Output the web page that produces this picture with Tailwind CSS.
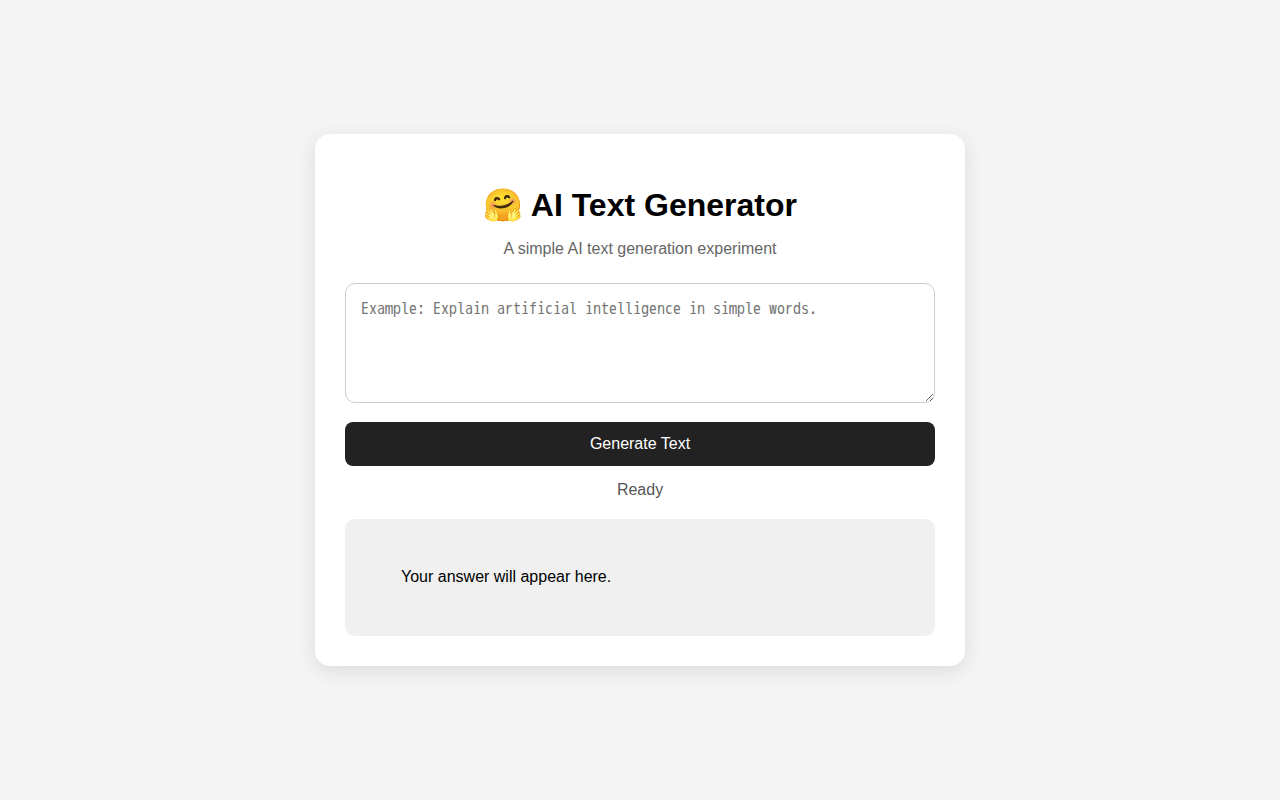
<!DOCTYPE html>
<html lang="en">
<head>
  <meta charset="UTF-8" />
  <meta name="viewport" content="width=device-width, initial-scale=1.0" />
  <title>AI Text Generator</title>
  <script src="https://cdn.jsdelivr.net/npm/@tailwindcss/browser@4"></script>
</head>
<body class="min-h-screen flex items-center justify-center bg-[#f4f4f4] text-black font-['Liberation_Sans',Arial,sans-serif]">

  <!-- === CARD === -->
  <main class="w-full max-w-[650px] p-[30px] bg-white rounded-[15px] shadow-[0_5px_20px_rgba(0,0,0,0.1)]">
    <h1 class="mt-[22px] mb-4 text-[32px] leading-[38px] font-bold text-center">🤗 AI Text Generator</h1>
    <p class="mb-[25px] text-base leading-[18px] text-center text-[#666]">A simple AI text generation experiment</p>

    <!-- === PROMPT === -->
    <textarea id="prompt" aria-label="Prompt" placeholder="Example: Explain artificial intelligence in simple words." class="block w-full h-[120px] p-[15px] mb-[19px] border border-[#ccc] rounded-[10px] text-base leading-5 resize-y font-['WenQuanYi_Zen_Hei_Mono','Noto_Sans_Mono_CJK_SC',monospace] placeholder:text-[#757575]"></textarea>
    <button id="generate" type="button" class="block w-full h-11 bg-[#222] text-white text-base rounded-lg cursor-pointer">Generate Text</button>
    <p id="status" class="mt-[15px] mb-5 text-base leading-[18px] text-center text-[#555]">Ready</p>

    <!-- === ANSWER === -->
    <div id="output" class="px-14 pt-[45px] pb-[47px] bg-[#f0f0f0] rounded-[10px] text-base leading-[25px] whitespace-pre-wrap">Your answer will appear here.</div>
  </main>

  <script>
    const promptBox = document.getElementById("prompt");
    const statusText = document.getElementById("status");
    const output = document.getElementById("output");

    document.getElementById("generate").addEventListener("click", () => {
      const text = promptBox.value.trim();
      if (!text) {
        statusText.textContent = "Please enter a prompt.";
        return;
      }
      output.textContent = text;
      statusText.textContent = "Ready";
    });
  </script>
</body>
</html>
